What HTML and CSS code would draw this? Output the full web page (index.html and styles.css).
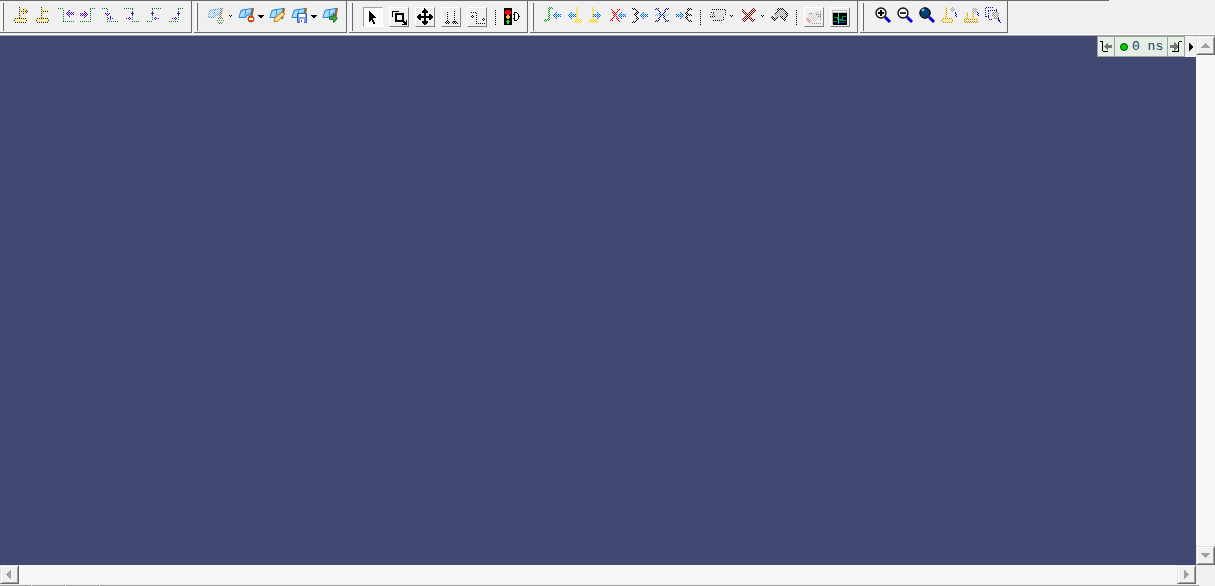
FILE: index.html
```html
<!DOCTYPE html>
<html lang="en">
<head>
<meta charset="utf-8">
<title>Waveform</title>
<link rel="stylesheet" href="styles.css">
</head>
<body>
<svg class="defs" aria-hidden="true">
  <defs>
    <pattern id="k-yellow" width="2" height="2" patternUnits="userSpaceOnUse"><path fill="#ffd700" d="M0 0h1v1H0zM1 1h1v1H1z"/></pattern>
    <pattern id="k-purple" width="2" height="2" patternUnits="userSpaceOnUse"><path fill="#4800d8" d="M0 0h1v1H0zM1 1h1v1H1z"/></pattern>
    <pattern id="k-blue" width="2" height="2" patternUnits="userSpaceOnUse"><path fill="#0050ff" d="M0 0h1v1H0z"/><path fill="#0090ff" d="M1 1h1v1H1z"/></pattern>
    <pattern id="k-green" width="2" height="2" patternUnits="userSpaceOnUse"><path fill="#00a010" d="M0 0h1v1H0zM1 1h1v1H1z"/></pattern>
    <pattern id="k-red" width="2" height="2" patternUnits="userSpaceOnUse"><path fill="#f00000" d="M0 0h1v1H0zM1 1h1v1H1z"/></pattern>
    <pattern id="k-maroon" width="2" height="2" patternUnits="userSpaceOnUse"><path fill="#c00000" d="M0 0h1v1H0z"/><path fill="#400000" d="M1 1h1v1H1z"/></pattern>
    <pattern id="k-black" width="2" height="2" patternUnits="userSpaceOnUse"><path fill="#000" d="M0 0h1v1H0zM1 1h1v1H1z"/></pattern>
    <pattern id="k-navy" width="2" height="2" patternUnits="userSpaceOnUse"><path fill="#101090" d="M0 0h1v1H0zM1 1h1v1H1z"/></pattern>
    <pattern id="k-cyan" width="2" height="2" patternUnits="userSpaceOnUse"><path fill="#61bfe8" d="M0 0h1v1H0zM1 1h1v1H1z"/></pattern>
    <pattern id="k-grey" width="2" height="2" patternUnits="userSpaceOnUse"><path fill="#a0a0a0" d="M0 0h1v1H0zM1 1h1v1H1z"/></pattern>
    <pattern id="k-light" width="2" height="2" patternUnits="userSpaceOnUse"><path fill="#d4d4d4" d="M0 0h1v1H0zM1 1h1v1H1z"/></pattern>
    <pattern id="k-white" width="2" height="2" patternUnits="userSpaceOnUse"><path fill="#fff" d="M0 0h1v1H0zM1 1h1v1H1z"/></pattern>
    <mask id="dither" maskUnits="userSpaceOnUse" x="0" y="0" width="22" height="22"><path fill="url(#k-white)" d="M0 0h22v22H0z"/></mask>
    <linearGradient id="sky" x2="1" y2="1"><stop stop-color="#4ba8ee"/><stop offset=".45" stop-color="#b7e8ff"/><stop offset="1" stop-color="#2785e0"/></linearGradient>
    <symbol id="left" viewBox="0 0 9 7"><path fill="url(#k-blue)" d="M0 3h1V2h1V1h1V0h2v2h4v3H5v2H3V6H2V5H1V4H0z"/></symbol>
    <symbol id="flag" viewBox="0 0 16 13"><path fill="url(#sky)" stroke="#2585d8" d="M3 3.500q2-1 5-1L14 1.500l-1 6-4 1-1 2H1z"/><path fill="none" stroke="#9a6228" stroke-width="2" d="M15 1l-2 11"/><path fill="none" stroke="#2e91df" d="M8 2L7 8"/></symbol>
    <symbol id="lens" viewBox="0 0 22 22"><path stroke="#0000c8" stroke-width="3" d="M13 12l5 5"/><circle cx="9" cy="8" r="5" fill="#f4f4f4" stroke="#111" stroke-width="1.400"/></symbol>
  </defs>
</svg>
<main class="app">
  <header class="toolbars">
    <div class="bar" role="toolbar" aria-label="Cursors">
      <button class="tool" aria-label="Add cursor"><svg viewBox="0 0 22 22"><path class="dot mast" d="M9.500 2v11"/><path class="dot yel" d="M10.500 3v11M4 14.500h13M5 16.500h12"/><path class="dot mast" d="M5 13.500h11M4 15.500h1M16 15.500h1M5 17.500h11"/><path class="dot yel" d="M12 5.500h6M14.500 3v5M15.500 4v5"/><path class="dot mast" d="M11 6.500h7M13.500 4v6M16.500 5v3"/></svg></button>
      <button class="tool" aria-label="Delete cursor"><svg viewBox="0 0 22 22"><path class="dot mast" d="M9.500 2v11"/><path class="dot yel" d="M10.500 3v11M4 14.500h13M5 16.500h12M11 5.500h7"/><path class="dot mast" d="M5 13.500h11M4 15.500h1M16 15.500h1M5 17.500h11M11 6.500h6"/></svg></button>
      <button class="tool" aria-label="Previous transition"><svg viewBox="0 0 22 22"><path class="dot grn" d="M4 3.500h6M9.500 5v11M9 16.500h11"/><path class="crisp" fill="url(#k-purple)" d="M11 8h1V7h1V6h1V5h2v2h4v3h-4v2h-2v-1h-1v-1h-1V9h-1z"/></svg></button>
      <button class="tool" aria-label="Next transition"><svg viewBox="0 0 22 22"><path class="dot grn" d="M4 16.500h10M14.500 4v13M14 3.500h6"/><path class="crisp" fill="url(#k-purple)" d="M4 8h4V6h2v1h1v1h1v1h1v1h-1v1h-1v1h-1v1H8v-2H4z"/></svg></button>
      <button class="tool" aria-label="Previous falling edge"><svg viewBox="0 0 22 22"><path class="dot grn" d="M4 3.500h5M9.500 4v12M9 16.500h11"/><path class="dot pur" d="M7 8.500h5M8 9.500h4M9 10.500h2M10 13.500h6M12 12.500h2M12 11.500h1M12 14.500h2"/></svg></button>
      <button class="tool" aria-label="Next falling edge"><svg viewBox="0 0 22 22"><path class="dot grn" d="M4 3.500h9M12.500 4v12M12 16.500h8"/><path class="dot pur" d="M11 8.500h4M12 7.500h1M12 9.500h1M6 13.500h6M9 12.500h2M9 14.500h2"/></svg></button>
      <button class="tool" aria-label="Previous rising edge"><svg viewBox="0 0 22 22"><path class="dot grn" d="M5 16.500h6M10.500 4v12M10 3.500h9"/><path class="dot pur" d="M9 8.500h4M10 7.500h1M10 9.500h1M12 13.500h6M13 12.500h2M13 14.500h2"/></svg></button>
      <button class="tool" aria-label="Next rising edge"><svg viewBox="0 0 22 22"><path class="dot grn" d="M5 16.500h10M14.500 4v12M14 3.500h5"/><path class="dot pur" d="M13 8.500h4M14 7.500h1M14 9.500h1M8 13.500h6M11 12.500h2M11 14.500h2"/></svg></button>
    </div>

    <div class="bar marks" role="toolbar" aria-label="Bookmarks">
      <button class="tool" aria-label="Add bookmark" disabled><svg viewBox="0 0 22 22"><g mask="url(#dither)"><use href="#flag" x="2" y="2" width="16" height="13"/></g><path class="dot greenish" d="M13 13.500h5M12 15.500h7M13 17.500h5M14 12.500h3M14 18.500h3"/></svg></button>
      <button class="drop" aria-label="Bookmark choices"><svg class="crisp" viewBox="0 0 9 22"><path d="M2 10h1v1h1v-1h1v1H4v1H3v-1H2z"/></svg></button>
      <button class="tool" aria-label="Delete bookmark"><svg viewBox="0 0 22 22"><use href="#flag" x="2" y="2" width="16" height="13"/><circle cx="15" cy="14" r="3" fill="#f04b10" stroke="#c93c00"/><path stroke="#fff" stroke-width="2" d="M13 14h4"/></svg></button>
      <button class="drop" aria-label="Delete choices"><svg class="crisp" viewBox="0 0 9 22"><path d="M0 10h6v1H5v1H4v1H2v-1H1v-1H0z"/></svg></button>
      <button class="tool" aria-label="Edit bookmark"><svg viewBox="0 0 22 22"><use href="#flag" x="2" y="2" width="16" height="13"/><path fill="#ffd87a" stroke="#c4841d" d="M7 17l1-4 7-6 3 2-7 7z"/><path stroke="#fff3bd" d="M9 15l7-6"/></svg></button>
      <button class="tool" aria-label="Save bookmarks"><svg viewBox="0 0 22 22"><use href="#flag" x="2" y="2" width="16" height="13"/><path fill="#7fa4e4" stroke="#3a62bb" d="M8.500 8.500h9v9h-9z"/><path fill="#fff" d="M10 9h6v3h-6zM11 14h4v4h-4z"/><path stroke="#315eb5" d="M12.500 15v2"/></svg></button>
      <button class="drop" aria-label="Save choices"><svg class="crisp" viewBox="0 0 9 22"><path d="M0 10h6v1H5v1H4v1H2v-1H1v-1H0z"/></svg></button>
      <button class="tool" aria-label="Go to bookmark"><svg viewBox="0 0 22 22"><use href="#flag" x="2" y="2" width="16" height="13"/><path fill="#4aa44f" stroke="#23742d" d="M9.500 11.500h4v-3l4 5-4 4v-3h-4z"/></svg></button>
    </div>

    <div class="bar modes" role="toolbar" aria-label="Mouse mode">
      <button class="box pressed" aria-label="Select" aria-pressed="true"><svg class="crisp" viewBox="0 0 20 20"><path d="M6 4h1v1h1v1h1v1h1v1h1v1h1v1h1v1h-3v2h1v2h1v2h-2v-2H9v-2H8v1H7v1H6z"/></svg></button>
      <button class="box" aria-label="Zoom area"><svg class="crisp" viewBox="0 0 20 20"><path fill="none" stroke="#000" d="M3.500 10V4.500H10M17.500 13v4.500H13"/><path fill="none" stroke="#000" stroke-width="2" d="M7 7h7v7H7zM13 13l4 4"/></svg></button>
      <button class="box" aria-label="Pan"><svg class="crisp" viewBox="0 0 20 20"><path d="M9 1h1v1h1v1h1v1h1v2h-2v3h3V7h2v1h1v1h1v2h-1v1h-1v1h-2v-2h-3v3h2v2h-1v1h-1v1H9v-1H8v-1H7v-2h2v-3H6v2H4v-1H3v-1H2V9h1V8h1V7h2v2h3V6H7V4h1V3h1z"/></svg></button>
      <button class="box" aria-label="Two cursor mode"><svg viewBox="0 0 20 20"><path class="dot black" d="M6.500 5v10M13.500 4v11M5 14.500h3M4 15.500h5M5 16.500h4M12 14.500h4M11 15.500h6M12 16.500h5"/></svg></button>
      <button class="box" aria-label="Edit mode"><svg viewBox="0 0 20 20"><path class="dot black" d="M4 5.500h6M9.500 6v10M9 16.500h9M4 9.500h3M5 8.500h1M5 10.500h1M15 12.500h4M16 11.500h1M16 13.500h1"/></svg></button>
      <span class="sep"></span>
      <button class="tool" aria-label="Stop drawing"><svg class="crisp" viewBox="0 0 22 22"><path d="M2 3h8v17H2z"/><path fill="red" d="M4 5h4v1h1v3H8v1H4V9H3V6h1z"/><path fill="#ffc82c" d="M5 10h2v1h1v2H7v1H5v-1H4v-2h1z"/><path fill="#20e040" d="M5 15h2v1h1v1H7v2H5v-2H4v-1h1z"/><path fill="#fff" stroke="#000" d="M12.500 7.500h2l2 2v4l-2 2h-2z"/><path d="M11 9h1v1h-1zM11 13h1v1h-1zM17 11h1v1h-1z"/></svg></button>
    </div>

    <div class="bar edit" role="toolbar" aria-label="Wave edit">
      <button class="tool" aria-label="Insert pulse"><svg class="crisp" viewBox="0 0 22 22"><path fill="none" stroke="url(#k-green)" stroke-width="2" d="M12 3H8v12H4v2"/><use href="#left" x="11" y="7" width="9" height="7"/></svg></button>
      <button class="tool" aria-label="Delete edge"><svg class="crisp" viewBox="0 0 22 22"><use href="#left" x="4" y="7" width="9" height="7"/><path fill="none" stroke="url(#k-yellow)" stroke-width="2" d="M14 2v12M11 15h8M11 17h8"/></svg></button>
      <button class="tool" aria-label="Move edge"><svg class="crisp" viewBox="0 0 22 22"><path fill="none" stroke="url(#k-yellow)" stroke-width="2" d="M8 2v12M4 15h9M4 17h9"/><g transform="rotate(180 13 10)"><use href="#left" x="9" y="6" width="9" height="7"/></g></svg></button>
      <button class="tool" aria-label="Invert"><svg class="crisp" viewBox="0 0 22 22"><path stroke="url(#k-red)" stroke-width="2" d="M4 4l9 13M12 4L4 16"/><use href="#left" x="10" y="7" width="9" height="7"/></svg></button>
      <button class="tool" aria-label="Mirror"><svg class="crisp" viewBox="0 0 22 22"><path fill="none" stroke="url(#k-black)" stroke-width="2" d="M3 4h3l3 4-3 2 3 3-3 4H3"/><use href="#left" x="10" y="7" width="9" height="7"/></svg></button>
      <button class="tool" aria-label="Stretch edge"><svg class="crisp" viewBox="0 0 22 22"><path fill="url(#k-cyan)" d="M4 9h14v2H4z"/><path fill="none" stroke="url(#k-navy)" stroke-width="2" d="M4 4h3l3 6-3 6H4M18 4h-3l-3 6 3 6h3"/></svg></button>
      <button class="tool" aria-label="Extend edge"><svg class="crisp" viewBox="0 0 22 22"><g transform="rotate(180 8 10)"><use href="#left" x="4" y="6" width="9" height="7"/></g><path fill="none" stroke="url(#k-black)" stroke-width="2" d="M19 4h-3l-3 4 2 2h4M15 10l-2 3 3 3h3"/></svg></button>
      <span class="sep"></span>
      <button class="tool" aria-label="Change value" disabled><svg viewBox="0 0 22 22"><path class="crisp" fill="url(#k-light)" d="M8 5h9v8h-2v2H7z"/><path class="dot black" d="M5 4.500h14M18.500 5v5M4 7.500h4M3 11.500h5M6 15.500h9M16.500 12v4"/><path class="dot faint" d="M3 9.500h5M4 12.500h4M6.500 8v6"/></svg></button>
      <button class="drop" aria-label="Value choices"><svg class="crisp" viewBox="0 0 9 22"><path d="M1 10h1v1h1v-1h1v1H3v1H2v-1H1z"/></svg></button>
      <button class="tool" aria-label="Delete"><svg class="crisp" viewBox="0 0 22 22"><path stroke="url(#k-maroon)" stroke-width="3" d="M4 5l12 11M17 4L5 16"/></svg></button>
      <button class="drop" aria-label="Delete choices"><svg class="crisp" viewBox="0 0 9 22"><path d="M1 10h1v1h1v-1h1v1H3v1H2v-1H1z"/></svg></button>
      <button class="tool" aria-label="Redo" disabled><svg class="crisp" viewBox="0 0 22 22"><path fill="url(#k-grey)" d="M5 9l4-5h6l4 5-4 5-4-3-5 2z"/><path fill="none" stroke="url(#k-black)" stroke-width="2" d="M6 9l4-5h4l4 5v2l-3 4-3-4M3 12l3 3 3-3"/></svg></button>
      <span class="sep"></span>
      <button class="box first" aria-label="Edit wave" disabled><svg viewBox="0 0 20 20"><path class="crisp" fill="url(#k-light)" d="M4 7l8-2 5 2-3 6-8 2-3-2z"/><path class="dot faint" d="M12 7.500h5M13 5.500h2M14 9.500h3M8 16.500h9M16.500 4v9M5 6.500h4"/><path class="crisp" stroke="url(#k-red)" opacity=".5" stroke-width="2" d="M3 12l4 4"/></svg></button>
      <button class="box" aria-label="Waveform window"><svg class="crisp" viewBox="0 0 20 20"><path fill="#b8b8b8" d="M2 3h15v14H2z"/><path fill="#fff" d="M3 4h13v1H3z"/><path d="M3 6h14v12H3z"/><path fill="none" stroke="#00982c" d="M4 10.500h3v2h5v-3h4M3 14.500h4M10 13.500h6"/><path stroke="#20dce8" d="M8.500 6v11"/><path stroke="#2020d0" d="M9 15.500h7"/></svg></button>
    </div>

    <div class="bar zooms" role="toolbar" aria-label="Zoom">
      <button class="tool" aria-label="Zoom in"><svg viewBox="0 0 22 22"><use href="#lens" width="22" height="22"/><path stroke="#000" stroke-width="2" d="M6 8h6M9 5v6"/></svg></button>
      <button class="tool" aria-label="Zoom out"><svg viewBox="0 0 22 22"><use href="#lens" width="22" height="22"/><path stroke="#333" stroke-width="2" d="M6 8h6"/></svg></button>
      <button class="tool" aria-label="Zoom full"><svg viewBox="0 0 22 22"><use href="#lens" width="22" height="22"/><circle cx="9" cy="8" r="5" fill="#064174" stroke="#111"/><path stroke="#88c8e0" stroke-width="2" d="M6 6l2-2"/></svg></button>
      <button class="tool" aria-label="Zoom on cursor"><svg viewBox="0 0 22 22"><path class="dot gold" d="M8.500 3v10M5 13.500h9M5 17.500h9M3 15.500h2M14 15.500h1"/><path class="dot yel" d="M7.500 2v11M4 14.500h11M4 16.500h11"/><path class="crisp" fill="url(#k-grey)" d="M13 2h3v1h1v3h-1v1h-3V6h-1V3h1z"/><path class="dot blue" d="M17 7.500h1M17.500 8v3M18.500 9v3"/></svg></button>
      <button class="tool" aria-label="Zoom between cursors"><svg viewBox="0 0 22 22"><path class="dot gold" d="M7.500 8v6M13.500 7v7M4 14.500h14M4 16.500h14M5 17.500h13"/><path class="dot yel" d="M6.500 7v6M12.500 6v8M5 13.500h13M4 15.500h1M17 15.500h1"/><path class="crisp" fill="url(#k-grey)" d="M13 3h3v1h1v3h-1v1h-3V7h-1V4h1z"/><path class="dot blue" d="M17.500 7v4M18.500 8v4"/></svg></button>
      <button class="tool" aria-label="Zoom range"><svg viewBox="0 0 22 22"><path class="dot navy" d="M4 2.500h8M3.500 3v9M6 5.500h9M6.500 6v8M14.500 4v4M4 11.500h3M7 14.500h4"/><path class="crisp" fill="url(#k-grey)" d="M11 7h4l2 2v3l-2 2h-3l-2-2V8z"/><path class="dot faint" d="M11 7.500h4M16.500 8v5M10.500 8v4M12 13.500h4"/><path class="dot blue" d="M16 14.500h1M17 15.500h1M17 16.500h2M18 17.500h1M16.500 13v3"/></svg></button>
    </div>
  </header>

  <section class="canvas" aria-label="Waveform view">
    <div class="time">
      <button aria-label="Previous edge"><svg class="crisp" viewBox="0 0 16 18"><path fill="none" stroke="#000" d="M2 3.500h3M4.500 4v9M5 13.500h5"/><path fill="#777" d="M6 8l4-4v3h4v3h-4v3L6 9z"/></svg></button>
      <output><span class="lamp"></span>0 ns</output>
      <button aria-label="Next edge"><svg class="crisp" viewBox="0 0 16 18"><path fill="none" stroke="#000" d="M4 13.500h6M10.500 4v10M11 3.500h3"/><path fill="#777" d="M10 8L6 4v3H2v3h4v3l4-4z"/></svg></button>
      <button class="more" aria-label="More"><svg class="crisp" viewBox="0 0 11 18"><path d="M4 5h1v1h1v1h1v1h1v2H7v1H6v1H5v1H4z"/></svg></button>
    </div>
  </section>

  <div class="scroll vertical">
    <button aria-label="Scroll up"><svg class="crisp" viewBox="0 0 15 15"><path d="M7 5h1v1h1v1h1v1h1v1h1v1H3V9h1V8h1V7h1V6h1z"/></svg></button>
    <button aria-label="Scroll down"><svg class="crisp" viewBox="0 0 15 15"><path d="M3 5h9v1h-1v1h-1v1H9v1H8v1H7V9H6V8H5V7H4V6H3z"/></svg></button>
  </div>
  <div class="scroll horizontal">
    <button aria-label="Scroll left"><svg class="crisp" viewBox="0 0 15 15"><path d="M8 3h1v9H8v-1H7v-1H6V9H5V8H4V7h1V6h1V5h1V4h1z"/></svg></button>
    <button aria-label="Scroll right"><svg class="crisp" viewBox="0 0 15 15"><path d="M5 3h1v1h1v1h1v1h1v1h1v1H9v1H8v1H7v1H6v1H5z"/></svg></button>
  </div>
  <footer class="status"><span></span><span></span><span></span><span class="rest"></span></footer>
</main>
</body>
</html>
```
FILE: styles.css
```css
* { box-sizing: border-box; }
body { margin: 0; background: #f0f0f0; color: #000; }
button { margin: 0; padding: 0; border: 0; background: none; color: #000; }
svg { display: block; }
.defs { position: absolute; width: 0; height: 0; }
.crisp { shape-rendering: crispEdges; }

.app {
  display: grid;
  grid-template-columns: minmax(0, 1fr) 19px;
  grid-template-rows: auto 1fr 19px 2px;
  min-height: 100vh;
}

.toolbars {
  grid-column: 1 / -1;
  display: flex;
  gap: 2px;
  padding-bottom: 2px;
  border-bottom: 1px solid #a0a0a0;
  background: linear-gradient(#696969, #696969) 0 0 / 1109px 1px no-repeat, linear-gradient(#fff, #fff) 0 100% / 100% 1px no-repeat;
  overflow: hidden;
}
.bar {
  display: flex;
  flex: none;
  align-items: flex-start;
  height: 33px;
  padding: 4px 5px 0 10px;
  border: solid #696969;
  border-width: 1px 1px 1px 0;
  background: linear-gradient(#696969, #696969) 3px 2px / 1px 28px no-repeat, linear-gradient(#fff, #fff) 1px 2px / 1px 28px no-repeat;
}
.marks { padding: 4px 4px 0 11px; }
.modes { padding: 4px 3px 0 14px; }
.edit { padding: 4px 4px 0 11px; }
.zooms { padding: 4px 3px 0 12px; }

.tool { flex: none; width: 22px; height: 22px; }
.drop { flex: none; width: 9px; height: 22px; }
.box {
  flex: none;
  width: 20px;
  height: 20px;
  margin: 2px 6px 0 0;
  border: 1px solid;
  border-color: #fff #808080 #808080 #fff;
}
.box svg { width: 20px; height: 20px; margin: -1px; }
.box:last-child { margin-right: 3px; }
.first { margin-left: 1px; }
.pressed { background: #fafafa; border-color: #a0a0a0 #fff #fff #a0a0a0; }
.sep {
  flex: none;
  width: 12px;
  height: 16px;
  margin-top: 5px;
  background: repeating-linear-gradient(#000 0 1px, transparent 1px 2px) 5px 0 / 1px 100% no-repeat;
}
.modes .sep { margin-left: -3px; }

.dot { fill: none; stroke-dasharray: 1 1; }
.mast { stroke: #3a2c18; }
.yel { stroke: #ffd700; }
.gold { stroke: #cf8400; }
.grn { stroke: #008020; }
.pur { stroke: #4800d8; }
.greenish { stroke: #5b8760; }
.black { stroke: #000; }
.navy { stroke: #101090; }
.blue { stroke: #0000e0; }
.faint { stroke: #888; }

.canvas { position: relative; background: #414973; min-height: 60px; }
.time {
  position: absolute;
  top: 0;
  right: 0;
  display: flex;
  height: 21px;
  border-left: 1px solid #a0a0a0;
}
.time button, .time output {
  display: flex;
  align-items: center;
  height: 21px;
  border: 1px solid #a0a0a0;
  border-left: 0;
  background: #e6efe6;
}
.time button { width: 17px; }
.time button svg { width: 16px; height: 18px; }
.time output {
  width: 53px;
  padding-left: 5px;
  gap: 4px;
  font: 13px "Liberation Mono", monospace;
  color: #123a60;
  white-space: pre;
}
.lamp { width: 8px; height: 8px; border: 1px solid #004800; border-radius: 50%; background: #00d000; }
.time .more { width: 11px; border: 0; background: #f0f0f0; }
.time .more svg { width: 11px; }

.scroll {
  display: flex;
  justify-content: space-between;
  background: repeating-conic-gradient(#fff 0 25%, #f0f0f0 0 50%) 0 0 / 2px 2px;
}
.vertical { flex-direction: column; }
.scroll button {
  width: 19px;
  height: 19px;
  border: 1px solid;
  border-color: #e3e3e3 #696969 #696969 #e3e3e3;
  box-shadow: inset 1px 1px #fff, inset -1px -1px #a0a0a0;
  background: #f0f0f0;
}
.scroll svg { width: 15px; height: 15px; margin: 1px; fill: #a0a0a0; }

.status { display: flex; gap: 1px; grid-column: 1 / -1; padding: 1px 16px 0 0; }
.status span { width: 33px; background: #a0a0a0; }
.status span:first-child { width: 31px; }
.status .rest { flex: 1; }
```
